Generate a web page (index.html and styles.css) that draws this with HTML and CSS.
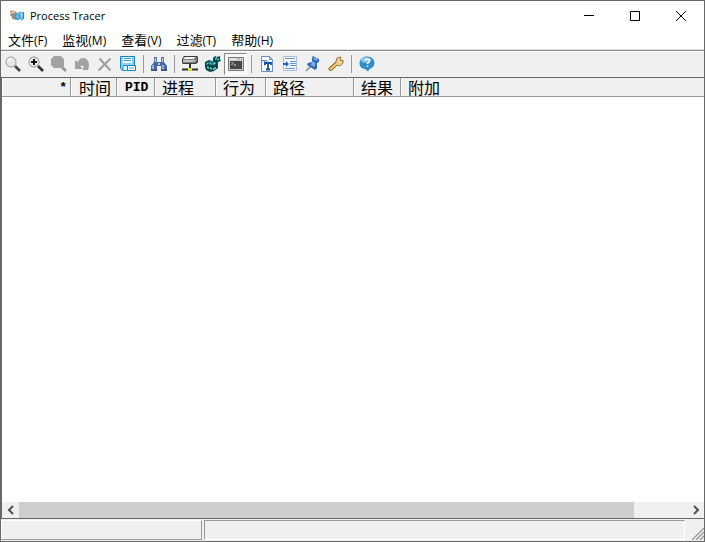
FILE: index.html
```html
<!DOCTYPE html>
<html lang="zh-CN">
<head>
<meta charset="utf-8">
<title>Process Tracer</title>
<link rel="stylesheet" href="styles.css">
</head>
<body>
<div class="window">
  <header class="titlebar">
    <svg class="app-icon" width="16" height="12" viewBox="0 0 16 12"><g fill="none" stroke-width="2"><circle cx="4.500" cy="3.500" r="2.200" stroke="#e39a50" stroke-dasharray="1.600 .5"/><circle cx="6" cy="6" r="2.500" stroke="#b98252"/><circle cx="8.500" cy="6.500" r="2.500" stroke="#2f9edb"/><circle cx="11.500" cy="5.500" r="2.800" stroke="#5fb4e8"/></g><path d="M1 2l2-1M1 5h2M12 10l2-1M14.500 2v7" stroke="#477fae"/></svg>
    <h1 class="title">Process Tracer</h1>
    <div class="caption">
      <button class="cap" aria-label="最小化"><svg width="12" height="12" viewBox="0 0 12 12"><path d="M1 5.500h10"/></svg></button>
      <button class="cap" aria-label="最大化"><svg width="12" height="12" viewBox="0 0 12 12"><path d="M1.500 1.500h9v9h-9z"/></svg></button>
      <button class="cap" aria-label="关闭"><svg width="12" height="12" viewBox="0 0 12 12"><path d="M1 1l10 10M11 1L1 11"/></svg></button>
    </div>
  </header>
  <nav class="menubar">
    <button>文件<span>(F)</span></button>
    <button>监视<span>(M)</span></button>
    <button>查看<span>(V)</span></button>
    <button>过滤<span>(T)</span></button>
    <button>帮助<span>(H)</span></button>
  </nav>
  <div class="toolbar" role="toolbar">
    <button class="tool" aria-label="搜索"><svg viewBox="0 0 16 16"><path d="M10 10l5 5" stroke="#444" stroke-width="2.600"/><circle cx="6" cy="6" r="5" fill="#e6e6e6" stroke="#b4b4b4" stroke-width="1.300"/><path d="M3 6a3.500 3.500 0 0 1 3.500-3" fill="none" stroke="#fff" stroke-width="2"/></svg></button>
    <button class="tool" aria-label="放大"><svg viewBox="0 0 16 16"><path d="M10 10l5 5" stroke="#333" stroke-width="2.600"/><circle cx="6" cy="6" r="5" fill="#eee" stroke="#aaa" stroke-width="1.300"/><path d="M3 6h6M6 3v6" stroke="#111" stroke-width="2"/></svg></button>
    <button class="tool" aria-label="缩小" disabled><svg viewBox="0 0 16 16"><path d="M10 10l5 5" stroke="#999" stroke-width="3"/><path d="M3 0h7l3 3v7l-2 2H3l-3-3V3z" fill="#a2a2a2"/></svg></button>
    <button class="tool" aria-label="撤销" disabled><svg viewBox="0 0 16 16"><path d="M1 4v9h8L6.500 10.500C8 8.500 10.500 9 9 14h5c2-5 1-11-4-12-3-.5-5 1-6 4z" fill="#a2a2a2"/></svg></button>
    <button class="tool" aria-label="删除" disabled><svg viewBox="0 0 16 16"><path d="M2.500 2.500l11 12M13.500 2.500l-12 12" stroke="#a0a0a0" stroke-width="2.200"/></svg></button>
    <button class="tool" aria-label="保存"><svg viewBox="0 0 16 16"><path d="M.5.5h14v14h-12l-2-2z" fill="#8bd3f5" stroke="#1583bd"/><path d="M3 1h9v6H3z" fill="#fff"/><path d="M4 2.500h7M4 4.500h7" stroke="#3598c8"/><path d="M3 9.500h7v5H3z" fill="#d9f2fd" stroke="#2c91c5"/><path d="M7.500 9.500h8v5h-8z" fill="#fff" stroke="#1583bd"/><path d="M9 12h5" stroke="#55a8ce"/></svg></button>
    <span class="sep"></span>
    <button class="tool" aria-label="查找"><svg viewBox="0 0 16 16"><path d="M3 1h3v5h4V1h3v5l3 4v5h-6v-5H6v5H0v-5l3-4z" fill="#4a69a3"/><path d="M4.500 2v4M11.500 2v4M2 9v5M12 9v5" stroke="#b5cdeb" stroke-width="1.400"/><path d="M0 14h6M10 14h6" stroke="#213d70"/><path d="M7 7h2v2H7z" fill="#a9c5e8"/></svg></button>
    <span class="sep"></span>
    <button class="tool" aria-label="网络"><svg viewBox="0 0 16 16"><path d="M2 0h13l1 1v5l-2 2H1L0 7V3z" fill="#3c3c3c"/><path d="M3 1h11l-2 2H1z" fill="#f4f4f4"/><path d="M1 3.500h12v3H1z" fill="#c2c2c2"/><path d="M13 3l2-2v4l-2 2z" fill="#888"/><path d="M8 8v5M0 13.500h16" stroke="#333" stroke-width="2"/><path d="M6 12h4v3H6z" fill="#dce52e"/><path d="M11 5h1v1h-1z" fill="#2c4"/></svg></button>
    <button class="tool" aria-label="注册表"><svg viewBox="0 0 16 16"><path d="M0 6l4-2 4 1V2l2-2 2 1 3-1v3l1 2-3 1v6l-4 3-4 1-4-2-1-3z" fill="#084448"/><path d="M1.500 7l2-1v2l-2 1zm3-1l2 1v2l-2-1zm3 1l3-1v2l-3 1zM2 10l2 1v2l-2-1zm3 1l2 1v2l-2-1zm3 1l3-1v2l-3 1zM4 5l3-1 2 1-2 1zM10 2l2-1v2l-2 1zm3 0l1 1-1 2-1-1z" fill="#58cccc"/></svg></button>
    <button class="tool pressed" aria-label="进程" aria-pressed="true"><svg viewBox="0 0 16 16"><path d="M.5 1.500h15v13H.5z" fill="#c8c8c8" stroke="#777"/><path d="M1 2h14v2H1z" fill="#e4e4e4"/><path d="M9 3h1m1 0h1m1 0h1" stroke="#777"/><path d="M2 5h12v8H2z" fill="#484848"/><path d="M3.500 6l1.500 1.500L3.500 9M6 9h2" stroke="#ddd" fill="none"/></svg></button>
    <span class="sep"></span>
    <button class="tool" aria-label="字体"><svg viewBox="0 0 16 16"><path d="M2.500.5h8l3 3v12h-11z" fill="#fff" stroke="#6b8ebd"/><path d="M10.500.5v3h3z" fill="#c6daf2" stroke="#6b8ebd"/><path d="M3 6V4.500h5V6M5.500 4.500v5" stroke="#5b8bcb" fill="none"/><path d="M6 9V7h6v2M9 7v6.500M7 13.500h4" stroke="#174fa8" stroke-width="1.800" fill="none"/></svg></button>
    <button class="tool" aria-label="缩进"><svg viewBox="0 0 16 16"><path d="M1.500.5h13v14h-13z" fill="#f4f8fd" stroke="#a8bdd7"/><path d="M3 2.500h10M8 5.500h6M8 7.500h6M8 9.500h6M3 12.500h10" stroke="#6795ce"/><path d="M1 7h3V5l3 3-3 3V9H1z" fill="#2463b8"/></svg></button>
    <button class="tool" aria-label="固定"><svg viewBox="0 0 16 16"><path d="M5.500 10.500L1 15" stroke="#888" stroke-width="1.400"/><path d="M8 0l6 3v3l-2 1v5l-2 2-8-5 1-2 4-1V2z" fill="#2f67b4"/><path d="M9 1l4 2-1 2-4-2zM7.500 5l3 2-1 4-4-2z" fill="#79aee8"/></svg></button>
    <button class="tool" aria-label="设置"><svg viewBox="0 0 16 16"><path d="M2.500 13L9 7" stroke="#8b6425" stroke-width="4" stroke-linecap="round"/><path d="M8 6l1-4 4-1-1 3 1 1 2-1v3l-3 3-3-1z" fill="#f1d59a" stroke="#9a763c"/><path d="M2.500 13L10 6.500" stroke="#f5d27d" stroke-width="2" stroke-linecap="round"/></svg></button>
    <span class="sep"></span>
    <button class="tool" aria-label="帮助"><svg viewBox="0 0 16 16"><path d="M7.500.5C12 0 15.500 3 15.500 7c0 3-2 5-5 6L9 15.500 6 13C2 12.500.5 10 .5 7S3 1 7.500.5z" fill="#328bc4"/><ellipse cx="7" cy="4" rx="5.500" ry="2.800" fill="#83c8ea"/><path d="M6 4.500c.5-2 4.500-2 4.500.3C10.500 6.500 8.500 6.300 8.500 8M8.500 9.500V11" fill="none" stroke="#fff" stroke-width="1.600"/></svg></button>
  </div>
  <main class="list">
    <table class="columns">
      <colgroup><col class="c-mark"><col class="c-time"><col class="c-pid"><col class="c-proc"><col class="c-act"><col class="c-path"><col class="c-res"><col></colgroup>
      <thead><tr><th class="mono mark">*</th><th>时间</th><th class="mono">PID</th><th>进程</th><th>行为</th><th>路径</th><th>结果</th><th>附加</th></tr></thead>
    </table>
    <div class="rows"></div>
    <div class="scrollbar">
      <button aria-label="向左滚动"><svg width="8" height="10" viewBox="0 0 8 10"><path d="M6 1L2 5l4 4"/></svg></button>
      <div class="track"><div class="thumb"></div></div>
      <button aria-label="向右滚动"><svg width="8" height="10" viewBox="0 0 8 10"><path d="M2 1l4 4-4 4"/></svg></button>
    </div>
  </main>
  <footer class="statusbar">
    <div class="pane first"></div>
    <div class="pane second"></div>
    <svg class="grip" width="13" height="13" viewBox="0 0 13 13"><path d="M1 13L13 1M5 13l8-8M9 13l4-4" stroke="#999" stroke-width="1.400"/></svg>
  </footer>
</div>
</body>
</html>
```
FILE: styles.css
```css
* { box-sizing: border-box; }
body { margin: 0; font-family: "Open Sans", "Noto Sans CJK SC", sans-serif; color: #000; }
button { font: inherit; color: inherit; background: none; border: 0; padding: 0; margin: 0; }
svg { display: block; }

.window { display: flex; flex-direction: column; height: 100vh; border: 1px solid #686868; background: #fff; }

.titlebar { display: flex; align-items: center; height: 30px; padding-left: 8px; }
.title { flex: 1; margin: 0 0 0 5px; font-size: 11px; font-weight: 400; line-height: 16px; }
.caption { display: flex; }
.cap { display: flex; align-items: center; justify-content: center; width: 46px; height: 28px; }
.cap path { fill: none; stroke: #000; }

.menubar { display: flex; gap: 1px; height: 18px; }
.menubar button { padding: 0 7px; font-family: "Noto Sans CJK SC", sans-serif; font-size: 13px; line-height: 18px; white-space: nowrap; }
.menubar span { font-family: "Open Sans", sans-serif; font-size: 12px; }

.toolbar { display: flex; align-items: center; height: 28px; padding-top: 1px; background: #f0f0f0; border-top: 1px solid #e6e6e6; box-shadow: inset 0 1px #888, inset 0 2px #fff; }
.tool { display: flex; align-items: center; justify-content: center; width: 23px; height: 22px; }
.tool svg { width: 16px; height: 16px; fill: none; }
.pressed { padding-left: 1px; border: 1px solid; border-color: #888 #fff #fff #888; background: #f8f8f8; }
.sep { width: 8px; height: 18px; background: linear-gradient(#999, #999) 4px 0 / 1px 100% no-repeat; }

.list { flex: 1; display: flex; flex-direction: column; min-height: 0; border: solid #686868; border-width: 1px 0 1px 1px; }
.columns { width: 100%; table-layout: fixed; border-collapse: separate; border-spacing: 0; background: #f0f0f0; }
.columns th { height: 19px; padding: 0 0 0 8px; border: 0 solid #999; border-bottom-width: 1px; box-shadow: inset -1px 0 #999, inset 1px 0 #fff; font: 400 16px/18px "Noto Sans CJK SC", sans-serif; text-align: left; white-space: nowrap; }
.columns th:nth-child(n+4) { padding-left: 7px; }
.columns th:last-child { box-shadow: inset 1px 0 #fff; }
.columns .mono { padding-top: 1px; font: 700 13px/17px "Liberation Mono", monospace; }
.columns .mark { padding: 1px 4px 0 0; text-align: right; }
.c-mark { width: 69px; }
.c-time { width: 46px; }
.c-pid { width: 38px; }
.c-proc { width: 61px; }
.c-act { width: 50px; }
.c-path { width: 88px; }
.c-res { width: 47px; }
.rows { flex: 1; }

.scrollbar { display: flex; height: 16px; background: #f0f0f0; }
.scrollbar button { display: flex; align-items: center; justify-content: center; width: 17px; }
.scrollbar path { fill: none; stroke: #505050; stroke-width: 2; }
.track { flex: 1; }
.thumb { width: 92%; height: 100%; background: #cdcdcd; }

.statusbar { display: flex; align-items: flex-end; height: 22px; padding: 1px 0; background: #f0f0f0; }
.pane { height: 20px; border: 1px solid; }
.first { width: 201px; margin-right: 2px; border-color: #fff #999 #999 #fff; }
.second { flex: 1; border-color: #999 #fff #fff #999; }
.grip { margin-left: 6px; }
```
